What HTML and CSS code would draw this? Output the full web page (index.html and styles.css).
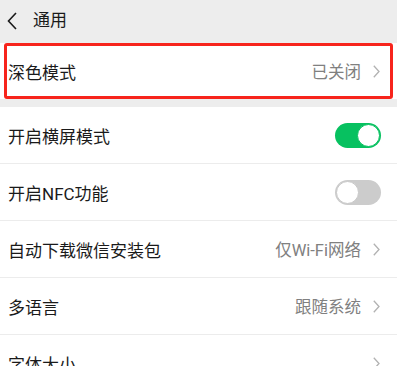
FILE: index.html
```html
<!DOCTYPE html>
<html lang="zh-CN">
<head>
<meta charset="utf-8">
<title>通用</title>
<link rel="stylesheet" href="styles.css">
</head>
<body>
<div class="screen">
  <header class="topbar">
    <svg class="back" width="10" height="18" viewBox="0 0 10 18"><path d="M9 1 L1.5 9 L9 17" fill="none" stroke="#1a1a1a" stroke-width="1.6"/></svg>
    <span class="title">通用</span>
  </header>

  <div class="group">
    <div class="row highlight">
      <span class="label">深色模式</span>
      <span class="value">已关闭</span>
      <svg class="chev" width="7" height="13" viewBox="0 0 7 13"><path d="M0.8 0.8 L6 6.5 L0.8 12.2" fill="none" stroke="#b2b2b2" stroke-width="1.3"/></svg>
      <div class="mark"></div>
    </div>
  </div>

  <div class="group list">
    <div class="row">
      <span class="label">开启横屏模式</span>
      <span class="switch on"><span class="knob"></span></span>
    </div>
    <div class="row">
      <span class="label">开启NFC功能</span>
      <span class="switch"><span class="knob"></span></span>
    </div>
    <div class="row">
      <span class="label">自动下载微信安装包</span>
      <span class="value">仅Wi-Fi网络</span>
      <svg class="chev" width="7" height="13" viewBox="0 0 7 13"><path d="M0.8 0.8 L6 6.5 L0.8 12.2" fill="none" stroke="#b2b2b2" stroke-width="1.3"/></svg>
    </div>
    <div class="row">
      <span class="label">多语言</span>
      <span class="value">跟随系统</span>
      <svg class="chev" width="7" height="13" viewBox="0 0 7 13"><path d="M0.8 0.8 L6 6.5 L0.8 12.2" fill="none" stroke="#b2b2b2" stroke-width="1.3"/></svg>
    </div>
    <div class="row">
      <span class="label">字体大小</span>
      <span class="value"></span>
      <svg class="chev" width="7" height="13" viewBox="0 0 7 13"><path d="M0.8 0.8 L6 6.5 L0.8 12.2" fill="none" stroke="#b2b2b2" stroke-width="1.3"/></svg>
    </div>
  </div>
</div>
</body>
</html>
```
FILE: styles.css
```css
html, body {
  margin: 0;
  padding: 0;
  background: #ffffff;
}

.screen {
  width: 397px;
  height: 366px;
  overflow: hidden;
  background: #ededed;
  font-family: Roboto, "Noto Sans CJK SC", sans-serif;
  color: #1a1a1a;
}

.topbar {
  height: 43px;
  display: flex;
  align-items: center;
  padding-left: 7px;
  box-sizing: border-box;
}

.back {
  display: block;
  margin-top: -1px;
}

.title {
  margin-left: 16px;
  font-size: 17px;
  margin-top: -6px;
}

.group {
  background: #ffffff;
}

.list {
  margin-top: 8px;
}

.row {
  position: relative;
  height: 56px;
  display: flex;
  align-items: center;
  padding: 0 17px 0 8px;
  box-sizing: border-box;
  border-bottom: 1px solid #ececec;
}

.row.highlight {
  border-bottom: none;
}

.list .row {
  height: 57px;
}

.label {
  font-size: 17px;
  flex: 1;
  white-space: nowrap;
}

.value {
  font-size: 16.5px;
  color: #808080;
  margin-right: 12px;
}

.chev {
  display: block;
}

.mark {
  position: absolute;
  left: 4px;
  right: 4px;
  top: 0;
  bottom: 0;
  border: 3px solid #f7241c;
  border-radius: 3px;
}

.switch {
  position: relative;
  width: 46px;
  height: 25px;
  border-radius: 13px;
  background: #cccccc;
  margin-right: -1px;
}

.switch.on {
  background: #07c160;
}

.knob {
  position: absolute;
  top: 1px;
  left: 1px;
  width: 21px;
  height: 21px;
  border-radius: 50%;
  background: #ffffff;
  border: 1px solid #c8c8c8;
}

.switch.on .knob {
  left: auto;
  right: 1px;
  border-color: #07c160;
}
```
